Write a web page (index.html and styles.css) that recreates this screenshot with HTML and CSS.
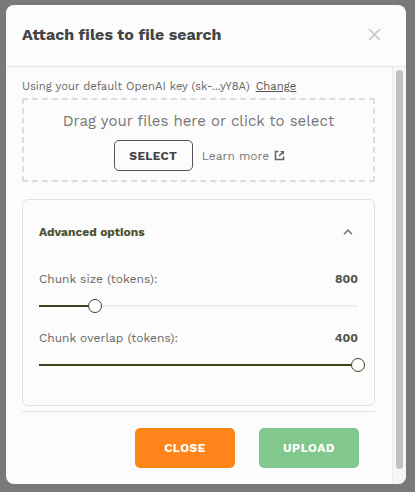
FILE: index.html
```html
<!DOCTYPE html>
<html>
<head>
<meta charset="utf-8">
<link rel="stylesheet" href="styles.css">
</head>
<body>
<div class="backdrop">
  <div class="modal">
    <div class="modal-header">
      <h2 class="title">Attach files to file search</h2>
      <svg class="close-x" width="13" height="13" viewBox="0 0 13 13"><path d="M1 1L12 12M12 1L1 12" stroke="#c4c4c4" stroke-width="1.6" fill="none"/></svg>
    </div>
    <div class="modal-body">
      <div class="content">
        <p class="key-line">Using your default OpenAI key (sk-...yY8A) <a class="change">Change</a></p>
        <div class="dropzone">
          <div class="drop-text">Drag your files here or click to select</div>
          <div class="drop-actions">
            <button class="select-btn">SELECT</button>
            <span class="learn">Learn more
              <svg width="11" height="11" viewBox="0 0 11 11"><path d="M4.5 1.5H1.5V9.5H9.5V6.5" stroke="#666" stroke-width="1.6" fill="none"/><path d="M6 1H10V5Z" fill="#666"/><path d="M9.5 1.5L5 6" stroke="#666" stroke-width="1.6"/></svg>
            </span>
          </div>
        </div>
        <div class="advanced">
          <div class="adv-head">
            <span class="adv-title">Advanced options</span>
            <svg width="10" height="6" viewBox="0 0 10 6"><path d="M1 5.2L5 1.2L9 5.2" stroke="#777" stroke-width="1.6" fill="none"/></svg>
          </div>
          <div class="field field-first">
            <div class="field-row"><span class="label">Chunk size (tokens):</span><span class="value">800</span></div>
            <div class="slider"><div class="fill" style="width:17.5%"></div><div class="thumb" style="left:17.5%"></div></div>
          </div>
          <div class="field field-second">
            <div class="field-row"><span class="label">Chunk overlap (tokens):</span><span class="value">400</span></div>
            <div class="slider"><div class="fill" style="width:100%"></div><div class="thumb" style="left:100%"></div></div>
          </div>
        </div>
        <div class="divider"></div>
        <div class="footer">
          <button class="btn btn-close">CLOSE</button>
          <button class="btn btn-upload">UPLOAD</button>
        </div>
      </div>
      <div class="scrollbar"><div class="thumb-bar"></div></div>
    </div>
  </div>
</div>
</body>
</html>
```
FILE: styles.css
```css
* { box-sizing: border-box; }
html, body { margin: 0; padding: 0; }
body {
  width: 415px;
  height: 492px;
  background: #797979;
  font-family: "Work Sans", "Inter", "Noto Sans", sans-serif;
  overflow: hidden;
}
.backdrop {
  padding: 5px 9px 8px 6px;
}
.modal {
  width: 400px;
  height: 479px;
  background: #fcfcfc;
  border-radius: 8px;
  overflow: hidden;
  display: flex;
  flex-direction: column;
}
.modal-header {
  height: 62px;
  flex: none;
  border-bottom: 1px solid #e9e4df;
  display: flex;
  align-items: center;
  justify-content: space-between;
  padding: 0 25px 3px 16px;
}
.title {
  margin: 0;
  font-size: 16px;
  font-weight: 700;
  color: #454545;
  letter-spacing: 0;
}
.close-x { margin-top: 1px; }
.modal-body {
  flex: 1;
  display: flex;
  min-height: 0;
}
.content {
  flex: 1;
  padding: 11px 17px 0 16px;
}
.key-line {
  margin: 0;
  font-size: 11.3px;
  line-height: 16px;
  color: #6a6a6a;
}
.change {
  color: #555;
  text-decoration: underline;
  margin-left: 2px;
}
.dropzone {
  margin-top: 4px;
  height: 84px;
  border: 2px dashed #dcdcdc;
  display: flex;
  flex-direction: column;
  align-items: center;
  padding-top: 11px;
}
.drop-text {
  font-size: 15px;
  line-height: 20px;
  color: #777;
}
.drop-actions {
  margin-top: 9px;
  display: flex;
  align-items: center;
  gap: 9px;
  margin-left: 2px;
}
.select-btn {
  width: 79px;
  height: 31px;
  border: 1px solid #555;
  border-radius: 5px;
  background: transparent;
  font-family: inherit;
  font-size: 12px;
  font-weight: 700;
  color: #444;
  letter-spacing: 0.3px;
}
.learn {
  font-size: 12px;
  color: #777;
  display: flex;
  align-items: center;
  gap: 5px;
}
.advanced {
  margin-top: 17px;
  height: 207px;
  border: 1px solid #e6e3d6;
  border-radius: 6px;
  padding: 0 16px;
}
.adv-head {
  height: 64px;
  display: flex;
  align-items: center;
  justify-content: space-between;
  padding-right: 5px;
}
.adv-title {
  font-size: 12px;
  font-weight: 700;
  color: #4b5230;
}
.field-row {
  display: flex;
  justify-content: space-between;
  align-items: center;
  font-size: 12px;
  line-height: 16px;
  color: #666;
}
.field-first { margin-top: 7px; }
.field-second { margin-top: 15px; }
.value {
  font-weight: 700;
  color: #555;
}
.slider {
  position: relative;
  margin-top: 10px;
  height: 18px;
}
.slider::before {
  content: "";
  position: absolute;
  left: 0; right: 0; top: 8px;
  height: 2px;
  background: #eeeeee;
}
.fill {
  position: absolute;
  left: 0; top: 8px;
  height: 2px;
  background: #3d4321;
}
.thumb {
  position: absolute;
  top: 2px;
  width: 14px;
  height: 14px;
  margin-left: -7px;
  border-radius: 50%;
  background: #fff;
  border: 1.5px solid #3d4321;
}
.divider {
  margin-top: 5px;
  height: 1px;
  background: #e2e2e2;
}
.footer {
  display: flex;
  justify-content: flex-end;
  gap: 24px;
  padding: 16px 16px 0 0;
}
.btn {
  width: 100px;
  height: 40px;
  border: none;
  border-radius: 5px;
  font-family: inherit;
  font-size: 12px;
  font-weight: 700;
  color: #fff;
  letter-spacing: 0.5px;
}
.btn-close { background: #ff851b; }
.btn-upload { background: #82c78b; }
.scrollbar {
  width: 14px;
  flex: none;
  border-left: 1px solid #ececec;
  background: #f6f6f6;
  padding: 3px 3px 0 3px;
}
.thumb-bar {
  width: 7px;
  height: 399px;
  border-radius: 4px;
  background: #c1c1c1;
}
```
